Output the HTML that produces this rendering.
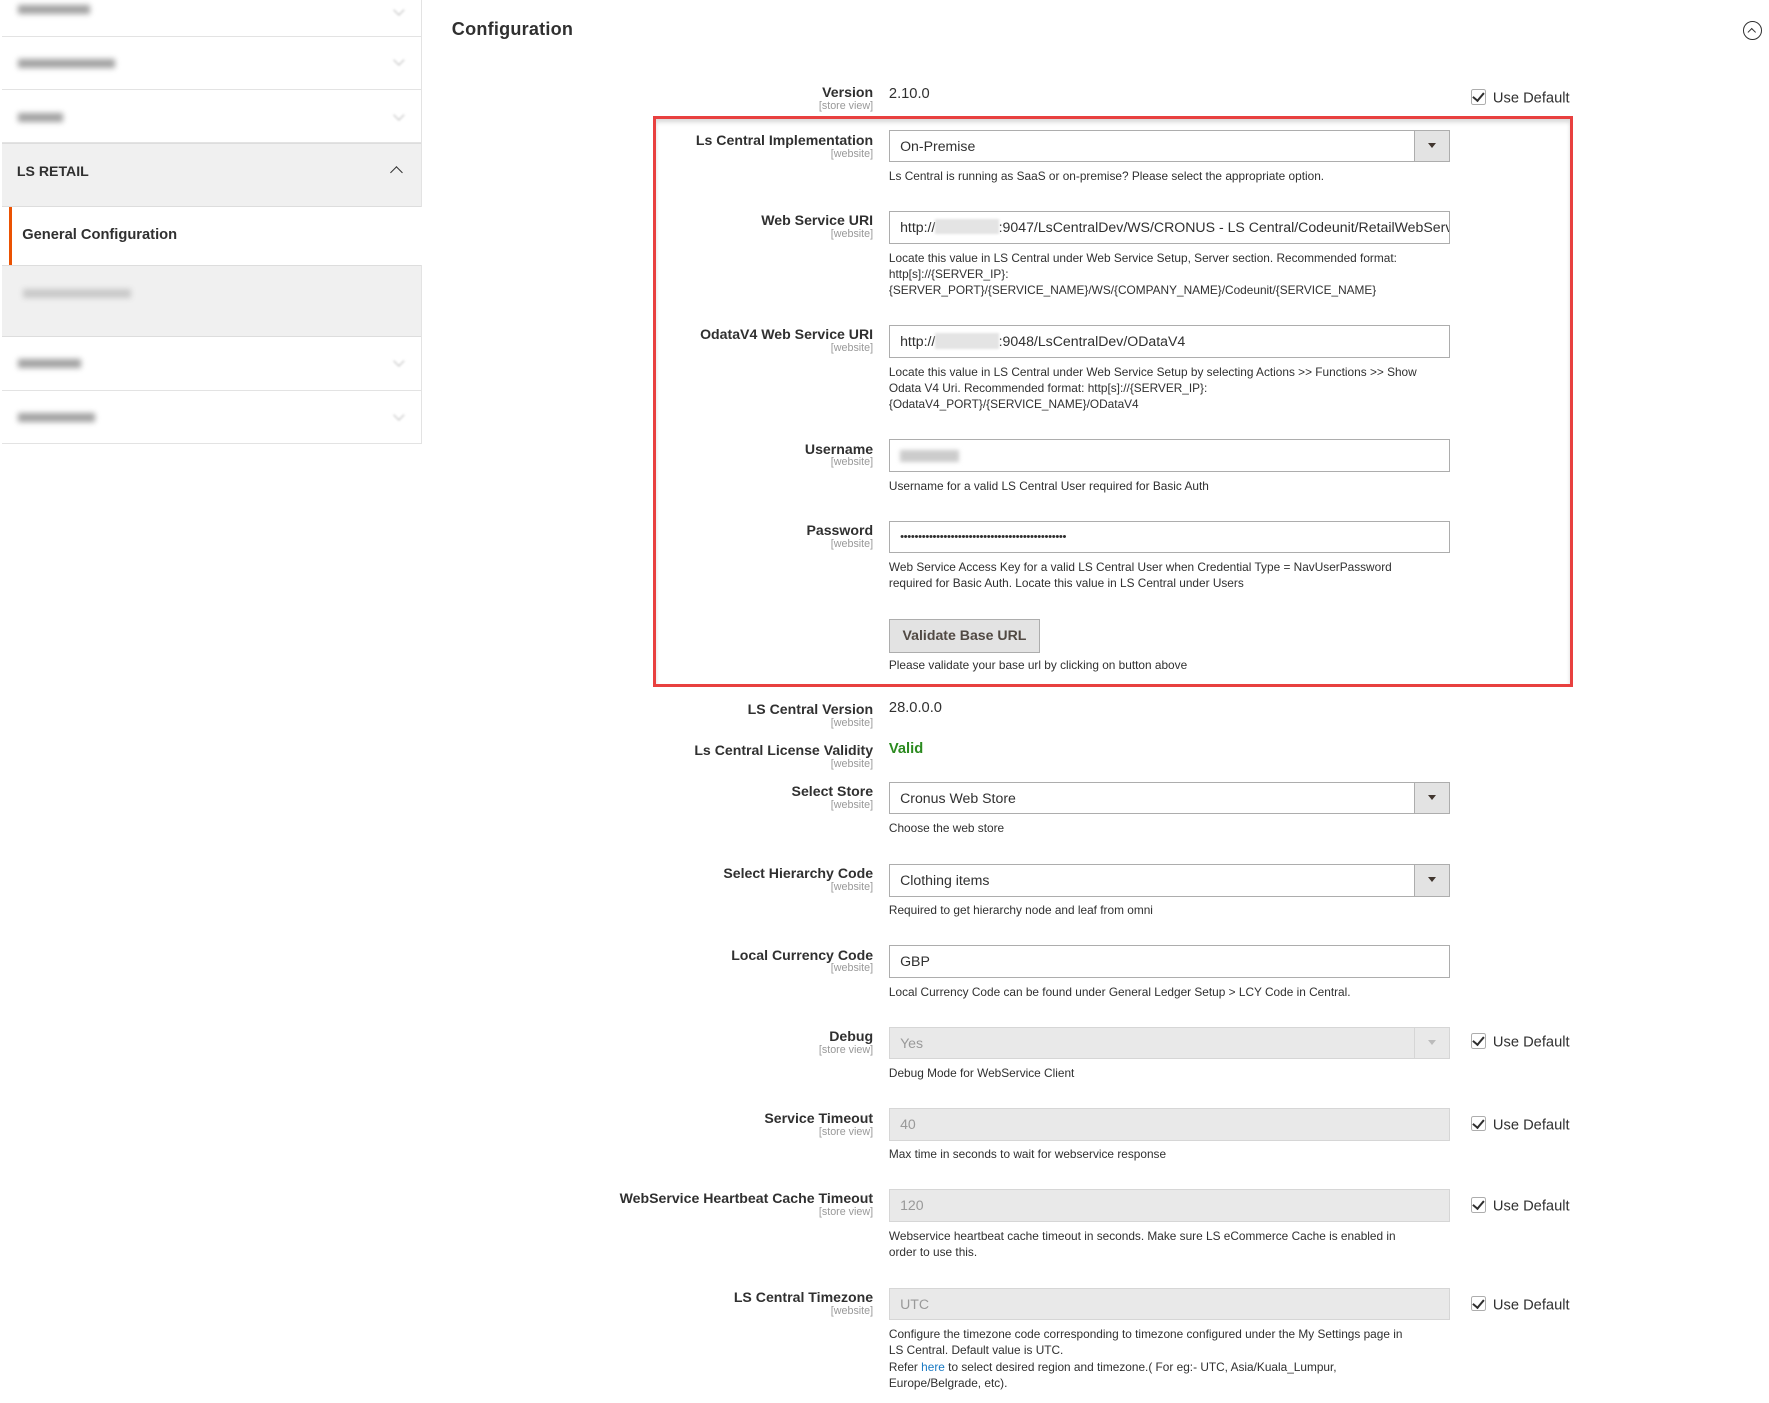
<!DOCTYPE html>
<html><head><meta charset="utf-8">
<style>
html,body{margin:0;padding:0;background:#fff;}
body{width:1769px;height:1402px;overflow:hidden;font-family:"Liberation Sans",Arial,sans-serif;color:#303030;}
#w{zoom:1.1295;width:1566px;height:1242px;position:relative;}
.a{position:absolute;}
.lbl{position:absolute;right:793px;text-align:right;font-size:12.5px;font-weight:bold;color:#303030;white-space:nowrap;line-height:15px;}
.lbl span{display:block;font-size:9.5px;font-weight:normal;color:#999;line-height:10px;}
.inp{position:absolute;left:787px;height:27px;border:1px solid #adadad;background:#fff;font-size:12.5px;line-height:27px;padding-left:9px;box-sizing:content-box;white-space:nowrap;overflow:hidden;width:486px;}
.dis{background:#e9e9e9;border-color:#d6d6d6;color:#999;}
.arr{position:absolute;right:0;top:0;width:30px;height:27px;border-left:1px solid #adadad;background:#e3e3e3;}
.arr:after{content:"";position:absolute;left:11px;top:11px;border-left:4px solid transparent;border-right:4px solid transparent;border-top:5px solid #41362f;}
.dis .arr{background:#e9e9e9;border-color:#d6d6d6;}
.dis .arr:after{border-top-color:#bbb;}
.note{position:absolute;left:787px;width:495px;font-size:10.5px;line-height:14.5px;color:#303030;}
.ud{position:absolute;left:1302px;font-size:13px;color:#303030;white-space:nowrap;}
.ud i{display:inline-block;width:12px;height:12px;border:1px solid #adadad;border-radius:2px;vertical-align:-2px;margin-right:6px;position:relative;}
.ud i:after{content:"";position:absolute;left:3px;top:0px;width:4px;height:8px;border:solid #303030;border-width:0 2px 2px 0;transform:rotate(40deg);}
.blur{position:absolute;background:#555;filter:blur(2.5px);opacity:.55;height:8px;}
.sb{position:absolute;left:2px;width:371px;border-bottom:1px solid #e3e3e3;}
.chev{position:absolute;right:16px;width:6px;height:6px;border:solid #bbb;border-width:0 1.5px 1.5px 0;transform:rotate(45deg);filter:blur(1px);}
</style></head><body><div id="w">
<div class="a" style="left:373px;top:0;width:1px;height:393px;background:#e3e3e3"></div>
<div class="sb" style="top:0;height:32px"><div class="blur" style="left:14px;top:4px;width:64px"></div><div class="chev" style="top:5px"></div></div>
<div class="sb" style="top:32px;height:47px"><div class="blur" style="left:14px;top:20px;width:86px"></div><div class="chev" style="top:18px"></div></div>
<div class="sb" style="top:80px;height:46px"><div class="blur" style="left:14px;top:20px;width:40px"></div><div class="chev" style="top:18px"></div></div>
<div class="a" style="left:2px;top:127px;width:371px;height:56px;background:#f0f0f0;border-top:1px solid #ddd;border-bottom:1px solid #ddd;box-sizing:border-box">
<div class="a" style="left:13px;top:16px;font-size:12.5px;font-weight:bold;color:#303030">LS RETAIL</div>
<div class="a" style="right:18px;top:21px;width:7px;height:7px;border:solid #303030;border-width:1.5px 0 0 1.5px;transform:rotate(45deg)"></div></div>
<div class="a" style="left:8px;top:183px;width:365px;height:52px;background:#fff;border-left:3px solid #eb5202">
<div class="a" style="left:9px;top:18px;font-size:13px;font-weight:bold;color:#303030">General Configuration</div></div>
<div class="a" style="left:2px;top:235px;width:371px;height:63px;background:#f0f0f0;border-top:1px solid #ddd;border-bottom:1px solid #ddd;box-sizing:border-box"><div class="blur" style="left:18px;top:20px;width:96px;opacity:.25"></div></div>
<div class="sb" style="top:298px;height:47px"><div class="blur" style="left:14px;top:20px;width:56px"></div><div class="chev" style="top:18px"></div></div>
<div class="sb" style="top:346px;height:46px"><div class="blur" style="left:14px;top:20px;width:68px"></div><div class="chev" style="top:18px"></div></div>

<div class="a" style="left:400px;top:17px;font-size:16px;font-weight:bold;color:#303030;letter-spacing:.2px">Configuration</div>
<div class="a" style="left:1543px;top:19px;width:15px;height:15px;border:1px solid #303030;border-radius:50%"><div class="a" style="left:5px;top:6px;width:4px;height:4px;border:solid #303030;border-width:1.2px 0 0 1.2px;transform:rotate(45deg)"></div></div>

<div class="a" style="left:578px;top:103px;width:815px;height:505px;border:3px solid #e8403f;box-sizing:border-box;box-shadow:inset 0 3px 4px rgba(0,0,0,.15)"></div>

<div class="lbl" style="top:74px">Version<span>[store view]</span></div>
<div class="a" style="left:787px;top:76px;font-size:13px">2.10.0</div>
<div class="ud" style="top:79px"><i></i>Use Default</div>

<div class="lbl" style="top:117px">Ls Central Implementation<span>[website]</span></div>
<div class="inp" style="top:115px">On-Premise<div class="arr"></div></div>
<div class="note" style="top:149px">Ls Central is running as SaaS or on-premise? Please select the appropriate option.</div>

<div class="lbl" style="top:188px">Web Service URI<span>[website]</span></div>
<div class="inp" style="top:187px">http://<span style="display:inline-block;width:56px;height:14px;background:#e4e4e4;vertical-align:-2px;filter:blur(1px)"></span>:9047/LsCentralDev/WS/CRONUS - LS Central/Codeunit/RetailWebServices</div>
<div class="note" style="top:221px">Locate this value in LS Central under Web Service Setup, Server section. Recommended format:<br>http[s]://{SERVER_IP}:<br>{SERVER_PORT}/{SERVICE_NAME}/WS/{COMPANY_NAME}/Codeunit/{SERVICE_NAME}</div>

<div class="lbl" style="top:289px">OdataV4 Web Service URI<span>[website]</span></div>
<div class="inp" style="top:288px">http://<span style="display:inline-block;width:56px;height:14px;background:#e4e4e4;vertical-align:-2px;filter:blur(1px)"></span>:9048/LsCentralDev/ODataV4</div>
<div class="note" style="top:322px">Locate this value in LS Central under Web Service Setup by selecting Actions &gt;&gt; Functions &gt;&gt; Show<br>Odata V4 Uri. Recommended format: http[s]://{SERVER_IP}:<br>{OdataV4_PORT}/{SERVICE_NAME}/ODataV4</div>

<div class="lbl" style="top:390px">Username<span>[website]</span></div>
<div class="inp" style="top:389px"><span style="display:inline-block;width:52px;height:10px;background:#ccc;vertical-align:-1px;filter:blur(2px)"></span></div>
<div class="note" style="top:423px">Username for a valid LS Central User required for Basic Auth</div>

<div class="lbl" style="top:462px">Password<span>[website]</span></div>
<div class="inp" style="top:461px;font-size:10px;letter-spacing:-.3px">••••••••••••••••••••••••••••••••••••••••••••••</div>
<div class="note" style="top:495px">Web Service Access Key for a valid LS Central User when Credential Type = NavUserPassword<br>required for Basic Auth. Locate this value in LS Central under Users</div>

<div class="a" style="left:787px;top:548px;width:132px;height:28px;background:#e3e3e3;border:1px solid #adadad;font-size:12.5px;font-weight:bold;line-height:28px;text-align:center;color:#514943">Validate Base URL</div>
<div class="note" style="top:582px">Please validate your base url by clicking on button above</div>

<div class="lbl" style="top:621px">LS Central Version<span>[website]</span></div>
<div class="a" style="left:787px;top:620px;font-size:13px">28.0.0.0</div>

<div class="lbl" style="top:657px">Ls Central License Validity<span>[website]</span></div>
<div class="a" style="left:787px;top:656px;font-size:13px;font-weight:bold;color:#2b8a1f">Valid</div>

<div class="lbl" style="top:693px">Select Store<span>[website]</span></div>
<div class="inp" style="top:692px">Cronus Web Store<div class="arr"></div></div>
<div class="note" style="top:726px">Choose the web store</div>

<div class="lbl" style="top:766px">Select Hierarchy Code<span>[website]</span></div>
<div class="inp" style="top:765px">Clothing items<div class="arr"></div></div>
<div class="note" style="top:799px">Required to get hierarchy node and leaf from omni</div>

<div class="lbl" style="top:838px">Local Currency Code<span>[website]</span></div>
<div class="inp" style="top:837px">GBP</div>
<div class="note" style="top:871px">Local Currency Code can be found under General Ledger Setup &gt; LCY Code in Central.</div>

<div class="lbl" style="top:910px">Debug<span>[store view]</span></div>
<div class="inp dis" style="top:909px">Yes<div class="arr"></div></div>
<div class="ud" style="top:915px"><i></i>Use Default</div>
<div class="note" style="top:943px">Debug Mode for WebService Client</div>

<div class="lbl" style="top:983px">Service Timeout<span>[store view]</span></div>
<div class="inp dis" style="top:981px">40</div>
<div class="ud" style="top:988px"><i></i>Use Default</div>
<div class="note" style="top:1015px">Max time in seconds to wait for webservice response</div>

<div class="lbl" style="top:1054px">WebService Heartbeat Cache Timeout<span>[store view]</span></div>
<div class="inp dis" style="top:1053px">120</div>
<div class="ud" style="top:1060px"><i></i>Use Default</div>
<div class="note" style="top:1087px">Webservice heartbeat cache timeout in seconds. Make sure LS eCommerce Cache is enabled in<br>order to use this.</div>

<div class="lbl" style="top:1141px">LS Central Timezone<span>[website]</span></div>
<div class="inp dis" style="top:1140px">UTC</div>
<div class="ud" style="top:1147px"><i></i>Use Default</div>
<div class="note" style="top:1174px">Configure the timezone code corresponding to timezone configured under the My Settings page in<br>LS Central. Default value is UTC.<br>Refer <span style="color:#1979c3">here</span> to select desired region and timezone.( For eg:- UTC, Asia/Kuala_Lumpur,<br>Europe/Belgrade, etc).</div>
</div></body></html>
